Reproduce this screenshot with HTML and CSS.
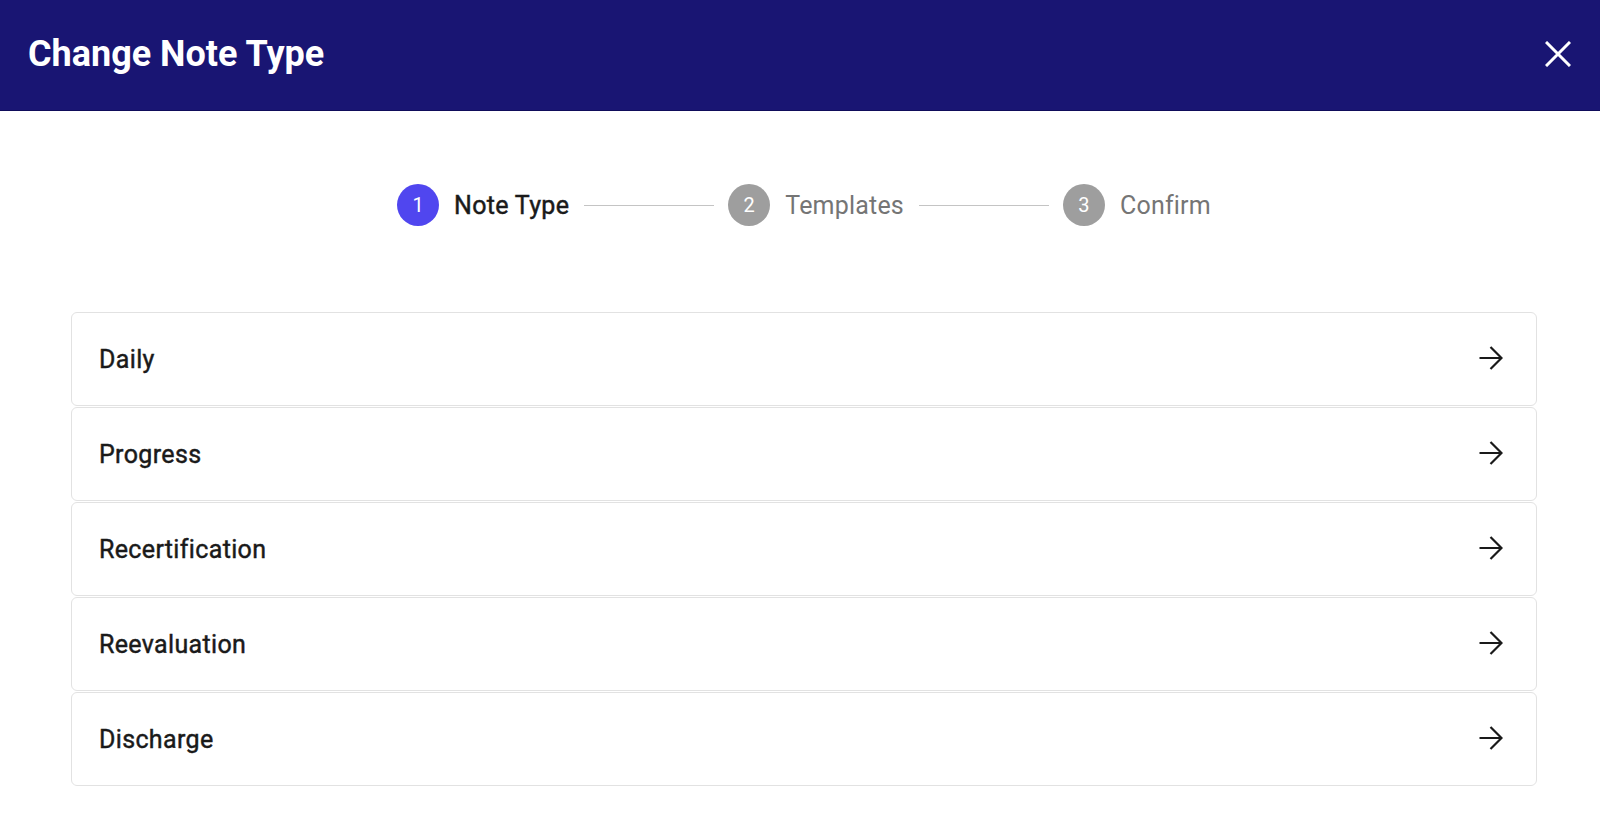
FILE: index.html
```html
<!DOCTYPE html>
<html lang="en">
<head>
<meta charset="utf-8">
<title>Change Note Type</title>
<link rel="stylesheet" href="styles.css">
</head>
<body>
<header class="header">
  <h1 class="title">Change Note Type</h1>
  <button class="close" aria-label="Close">
    <svg width="26" height="26" viewBox="0 0 26 26"><path d="M1 1L25 25M25 1L1 25" stroke="#fff" stroke-width="3" fill="none"/></svg>
  </button>
</header>
<main class="main">
  <div class="stepper">
    <div class="step active"><span class="num">1</span><span class="label">Note Type</span></div>
    <div class="connector"></div>
    <div class="step"><span class="num">2</span><span class="label">Templates</span></div>
    <div class="connector"></div>
    <div class="step"><span class="num">3</span><span class="label">Confirm</span></div>
  </div>
  <div class="list">
    <div class="item"><span class="item-label">Daily</span><svg class="arrow" width="24" height="24" viewBox="0 0 24 24"><path d="M0.5 12H22.5M11.5 1L22.5 12L11.5 23" stroke="#1a1a1a" stroke-width="2.2" fill="none"/></svg></div>
    <div class="item"><span class="item-label">Progress</span><svg class="arrow" width="24" height="24" viewBox="0 0 24 24"><path d="M0.5 12H22.5M11.5 1L22.5 12L11.5 23" stroke="#1a1a1a" stroke-width="2.2" fill="none"/></svg></div>
    <div class="item"><span class="item-label">Recertification</span><svg class="arrow" width="24" height="24" viewBox="0 0 24 24"><path d="M0.5 12H22.5M11.5 1L22.5 12L11.5 23" stroke="#1a1a1a" stroke-width="2.2" fill="none"/></svg></div>
    <div class="item"><span class="item-label">Reevaluation</span><svg class="arrow" width="24" height="24" viewBox="0 0 24 24"><path d="M0.5 12H22.5M11.5 1L22.5 12L11.5 23" stroke="#1a1a1a" stroke-width="2.2" fill="none"/></svg></div>
    <div class="item"><span class="item-label">Discharge</span><svg class="arrow" width="24" height="24" viewBox="0 0 24 24"><path d="M0.5 12H22.5M11.5 1L22.5 12L11.5 23" stroke="#1a1a1a" stroke-width="2.2" fill="none"/></svg></div>
  </div>
</main>
</body>
</html>
```
FILE: styles.css
```css
* { box-sizing: border-box; }
html, body { margin: 0; padding: 0; background: #fff; }
body { font-family: Roboto, "Liberation Sans", sans-serif; color: #1a1a1a; }

.header {
  height: 111px;
  background: #191573;
  display: flex;
  align-items: center;
  justify-content: space-between;
  padding: 0 29px 2px 28px;
  border-bottom: 1px solid #0f0c5a;
}
.title {
  margin: 0;
  color: #fff;
  font-size: 36px;
  font-weight: 700;
  letter-spacing: 0;
}
.close {
  background: none;
  border: 0;
  padding: 0;
  width: 26px;
  height: 26px;
  display: flex;
  cursor: pointer;
}

.main { padding: 73px 63px 0 71px; }

.stepper {
  display: flex;
  align-items: center;
  justify-content: center;
  height: 42px;
}
.step { display: flex; align-items: center; gap: 15px; }
.num {
  width: 42px;
  height: 42px;
  border-radius: 50%;
  background: #9e9e9e;
  color: #fff;
  font-size: 20px;
  display: flex;
  align-items: center;
  justify-content: center;
}
.step.active .num { background: #5046ef; }
.label { font-size: 25px; color: #757575; letter-spacing: 0.2px; }
.step.active .label {
  color: #1a1a1a;
  letter-spacing: 0.3px;
  -webkit-text-stroke: 0.45px #1a1a1a;
}
.connector {
  width: 130px;
  height: 1px;
  background: #c4c4c4;
  margin: 0 14px 0 15px;
}

.list {
  margin-top: 86px;
  display: flex;
  flex-direction: column;
  gap: 1px;
}
.item {
  height: 94px;
  border: 1px solid #e2e2e2;
  border-radius: 6px;
  display: flex;
  align-items: center;
  justify-content: space-between;
  padding: 0 33px 0 27px;
}
.item-label {
  font-size: 25px;
  font-weight: 400;
  color: #1a1a1a;
  margin-top: 1px;
  letter-spacing: 0.35px;
  -webkit-text-stroke: 0.45px #1a1a1a;
}
.arrow { margin-top: -3px; }
```
